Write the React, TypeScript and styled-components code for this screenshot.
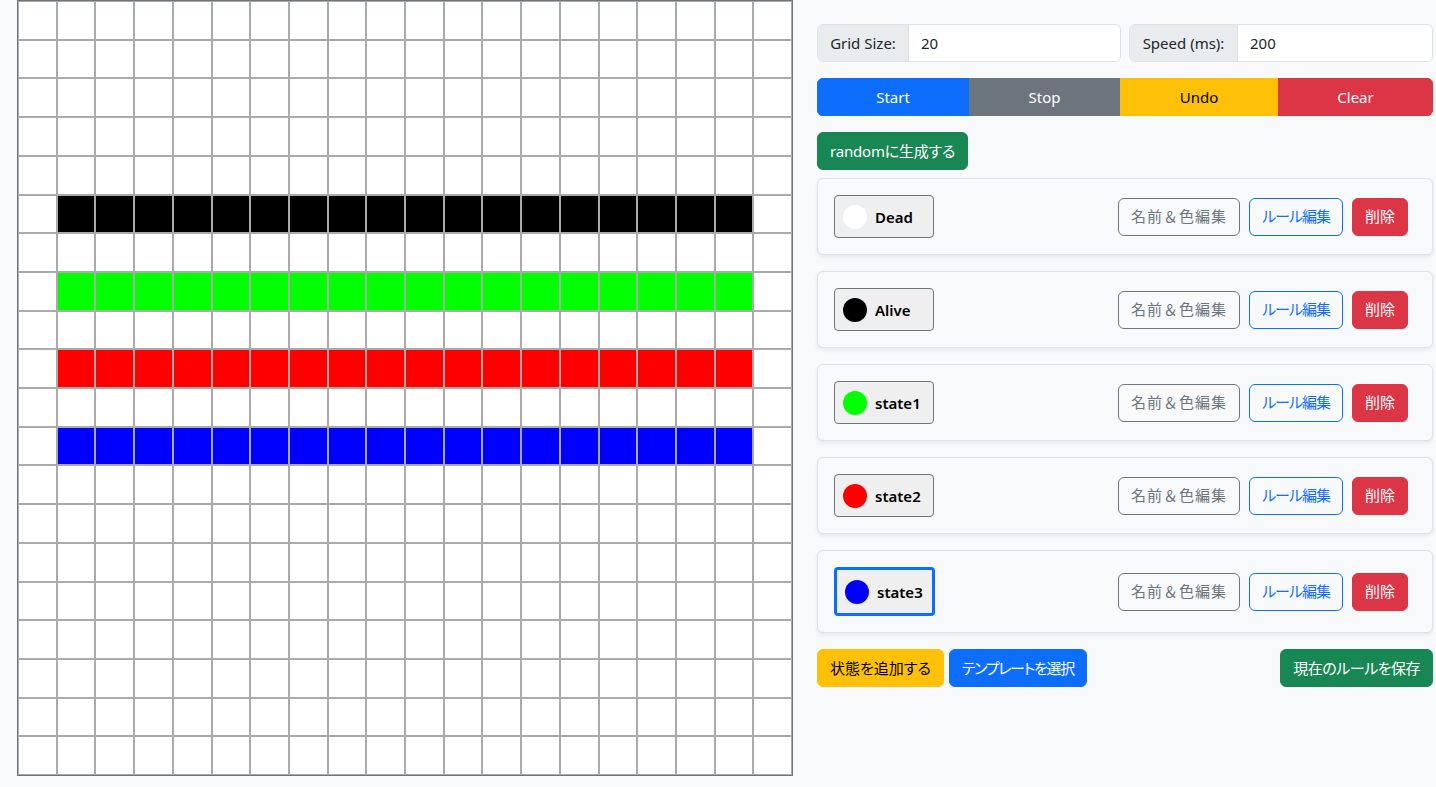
import React from "react";
import styled, { createGlobalStyle, css } from "styled-components";

const Global = createGlobalStyle`
  html, body { margin: 0; padding: 0; background: #f8f9fa; }
  body {
    font-family: "Noto Sans", "Noto Sans CJK JP", sans-serif;
    font-size: 16px;
    color: #212529;
  }
  * { box-sizing: border-box; }
`;

const Page = styled.div`
  display: flex;
  align-items: flex-start;
  padding-left: 17px;
  width: 1436px;
  height: 787px;
  overflow: hidden;
`;

const Board = styled.div`
  width: 776px;
  height: 776px;
  display: grid;
  grid-template-columns: repeat(20, 1fr);
  grid-template-rows: repeat(20, 1fr);
  border: 1px solid #6c757d;
  background: #fff;
  flex-shrink: 0;
`;

const Cell = styled.div<{ $c: string }>`
  background: ${(p) => p.$c};
  border: 1px solid #aaaaaa;
`;

const Side = styled.div`
  width: 616px;
  margin-left: 24px;
  padding-top: 24px;
  display: flex;
  flex-direction: column;
`;

const InputRow = styled.div`
  display: flex;
  gap: 8px;
`;

const InputGroup = styled.div`
  flex: 1;
  display: flex;
  height: 38px;
  border: 1px solid #dee2e6;
  border-radius: 6px;
  overflow: hidden;
  background: #fff;
`;

const Label = styled.span<{ $w: number }>`
  width: ${(p) => p.$w}px;
  flex-shrink: 0;
  display: flex;
  align-items: center;
  justify-content: center;
  background: #e9ecef;
  border-right: 1px solid #dee2e6;
  font-size: 15px;
  color: #212529;
`;

const Input = styled.input`
  flex: 1;
  min-width: 0;
  border: none;
  outline: none;
  padding: 0 12px;
  font: inherit;
  font-size: 15px;
  color: #212529;
  background: #fff;
`;

const Group = styled.div`
  margin-top: 16px;
  display: grid;
  grid-template-columns: 152fr 151fr 158fr 155fr;
  border-radius: 6px;
  overflow: hidden;
`;

const variants: Record<string, { bg: string; fg: string }> = {
  primary: { bg: "#0d6efd", fg: "#fff" },
  secondary: { bg: "#6c757d", fg: "#fff" },
  warning: { bg: "#ffc107", fg: "#000" },
  danger: { bg: "#dc3545", fg: "#fff" },
  success: { bg: "#198754", fg: "#fff" },
};

const outlines: Record<string, string> = {
  secondary: "#6c757d",
  primary: "#0d6efd",
};

const Btn = styled.button<{
  $v: string;
  $outline?: boolean;
  $flat?: boolean;
  $ls?: number;
  $full?: boolean;
}>`
  height: 38px;
  padding: 0 12px;
  font-family: "Noto Sans", "Noto Sans CJK JP", sans-serif;
  font-feature-settings: ${(p) => (p.$full ? "normal" : '"palt"')};
  letter-spacing: ${(p) => p.$ls ?? 0}px;
  font-size: 15px;
  line-height: 1;
  border-radius: ${(p) => (p.$flat ? "0" : "6px")};
  white-space: nowrap;
  cursor: pointer;
  ${(p) =>
    p.$outline
      ? css`
          background: transparent;
          color: ${outlines[p.$v]};
          border: 1px solid ${outlines[p.$v]};
        `
      : css`
          background: ${variants[p.$v].bg};
          color: ${variants[p.$v].fg};
          border: 1px solid ${variants[p.$v].bg};
        `}
`;

const RandomRow = styled.div`
  margin-top: 16px;
  margin-bottom: 8px;
  display: flex;
`;

const Card = styled.div`
  background: #f8f9fa;
  border: 1px solid #dee2e6;
  border-radius: 6px;
  box-shadow: 0 2px 4px rgba(0, 0, 0, 0.075);
  padding: 16px;
  margin-bottom: 16px;
  display: flex;
  align-items: center;
  justify-content: space-between;
`;

const StateBtn = styled.button<{ $sel?: boolean }>`
  width: ${(p) => (p.$sel ? 101 : 100)}px;
  height: ${(p) => (p.$sel ? 49 : 43)}px;
  display: flex;
  align-items: center;
  gap: 8px;
  padding: 0 8px;
  background: #efefef;
  border: ${(p) => (p.$sel ? "3px solid #0d6efd" : "1px solid #6c757d")};
  border-radius: 4px;
  font-family: "Noto Sans", sans-serif;
  font-size: 15px;
  font-weight: 600;
  color: #000;
`;

const Dot = styled.span<{ $c: string }>`
  width: 24px;
  height: 24px;
  border-radius: 50%;
  background: ${(p) => p.$c};
  flex-shrink: 0;
`;

const Actions = styled.div`
  display: flex;
  gap: 9px;
  margin-right: 8px;
`;

const Footer = styled.div`
  display: flex;
  gap: 5px;
`;

const Spacer = styled.div`
  flex: 1;
`;

const rowColors: Record<number, string> = {
  5: "#000000",
  7: "#00ff00",
  9: "#ff0000",
  11: "#0000ff",
};

const states = [
  { name: "Dead", color: "#ffffff" },
  { name: "Alive", color: "#000000" },
  { name: "state1", color: "#00ff00" },
  { name: "state2", color: "#ff0000" },
  { name: "state3", color: "#0000ff", sel: true },
];

export default function App() {
  const cells: React.ReactNode[] = [];
  for (let r = 0; r < 20; r++) {
    for (let c = 0; c < 20; c++) {
      const col = rowColors[r] && c >= 1 && c <= 18 ? rowColors[r] : "#ffffff";
      cells.push(<Cell key={`${r}-${c}`} $c={col} />);
    }
  }
  return (
    <>
      <Global />
      <Page>
        <Board>{cells}</Board>
        <Side>
          <InputRow>
            <InputGroup>
              <Label $w={91}>Grid Size:</Label>
              <Input defaultValue="20" />
            </InputGroup>
            <InputGroup>
              <Label $w={108}>Speed (ms):</Label>
              <Input defaultValue="200" />
            </InputGroup>
          </InputRow>
          <Group>
            <Btn $v="primary" $flat>Start</Btn>
            <Btn $v="secondary" $flat>Stop</Btn>
            <Btn $v="warning" $flat>Undo</Btn>
            <Btn $v="danger" $flat>Clear</Btn>
          </Group>
          <RandomRow>
            <Btn $v="success" $ls={-0.2}>randomに生成する</Btn>
          </RandomRow>
          {states.map((s) => (
            <Card key={s.name}>
              <StateBtn $sel={s.sel}>
                <Dot $c={s.color} />
                {s.name}
              </StateBtn>
              <Actions>
                <Btn $v="secondary" $outline $full $ls={1}>名前＆色編集</Btn>
                <Btn $v="primary" $outline $ls={-1}>ルール編集</Btn>
                <Btn $v="danger">削除</Btn>
              </Actions>
            </Card>
          ))}
          <Footer>
            <Btn $v="warning">状態を追加する</Btn>
            <Btn $v="primary" $ls={-1.3}>テンプレートを選択</Btn>
            <Spacer />
            <Btn $v="success" $ls={-0.5}>現在のルールを保存</Btn>
          </Footer>
        </Side>
      </Page>
    </>
  );
}
